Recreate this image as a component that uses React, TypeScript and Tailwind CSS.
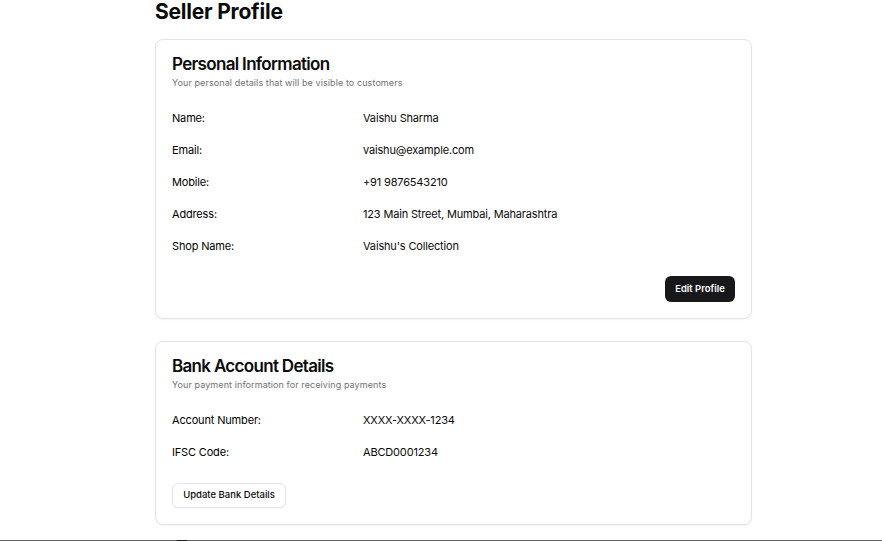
import React from "react";

const font = { fontFamily: "Inter, 'Noto Sans', sans-serif" };

function Row({ label, value }: { label: string; value: string }) {
  return (
    <div className="flex h-8 items-center text-[11px] leading-none tracking-[-0.015em] text-[#0a0a0a]">
      <div className="w-[191px] font-normal text-[#000]">{label}</div>
      <div>{value}</div>
    </div>
  );
}

function Card({
  title,
  subtitle,
  children,
}: {
  title: string;
  subtitle: string;
  children: React.ReactNode;
}) {
  return (
    <div className="rounded-lg border border-[#e4e4e7] bg-white px-4 pb-4 pt-[13px] shadow-[0_1px_2px_rgba(0,0,0,0.05)]">
      <h2 className="text-[17px] font-semibold leading-[22px] tracking-[-0.04em] text-[#0a0a0a]">{title}</h2>
      <p className="mt-px text-[9px] leading-[14px] tracking-[0.01em] text-[#71717a]">{subtitle}</p>
      <div className="mt-3">{children}</div>
    </div>
  );
}

export default function App() {
  return (
    <div className="relative h-[541px] w-[882px] overflow-hidden bg-white" style={font}>
      <div className="ml-[155px] w-[597px]">
        <h1 className="text-[21px] font-bold leading-6 tracking-[-0.01em] text-[#0a0a0a]">Seller Profile</h1>
        <div className="mt-[15px]">
          <Card title="Personal Information" subtitle="Your personal details that will be visible to customers">
            <Row label="Name:" value="Vaishu Sharma" />
            <Row label="Email:" value="vaishu@example.com" />
            <Row label="Mobile:" value="+91 9876543210" />
            <Row label="Address:" value="123 Main Street, Mumbai, Maharashtra" />
            <Row label="Shop Name:" value="Vaishu's Collection" />
            <div className="mt-[14px] flex justify-end">
              <button className="flex h-[26px] w-[70px] items-center justify-center rounded-md bg-[#18181b] text-[9.5px] font-semibold text-white">
                Edit Profile
              </button>
            </div>
          </Card>
        </div>
        <div className="mt-[22px]">
          <Card title="Bank Account Details" subtitle="Your payment information for receiving payments">
            <Row label="Account Number:" value="XXXX-XXXX-1234" />
            <Row label="IFSC Code:" value="ABCD0001234" />
            <div className="mt-[15px] flex">
              <button className="flex h-[25px] w-[114px] items-center justify-center rounded-md border border-[#e4e4e7] bg-white text-[9.5px] font-medium text-[#0a0a0a] shadow-[0_1px_2px_rgba(0,0,0,0.04)]">
                Update Bank Details
              </button>
            </div>
          </Card>
        </div>
      </div>
      <div className="absolute bottom-0 left-0 h-px w-full bg-[#5f5f5f]">
        <div className="ml-[177px] h-px w-[10px] bg-[#1a1a1a]" />
      </div>
    </div>
  );
}
